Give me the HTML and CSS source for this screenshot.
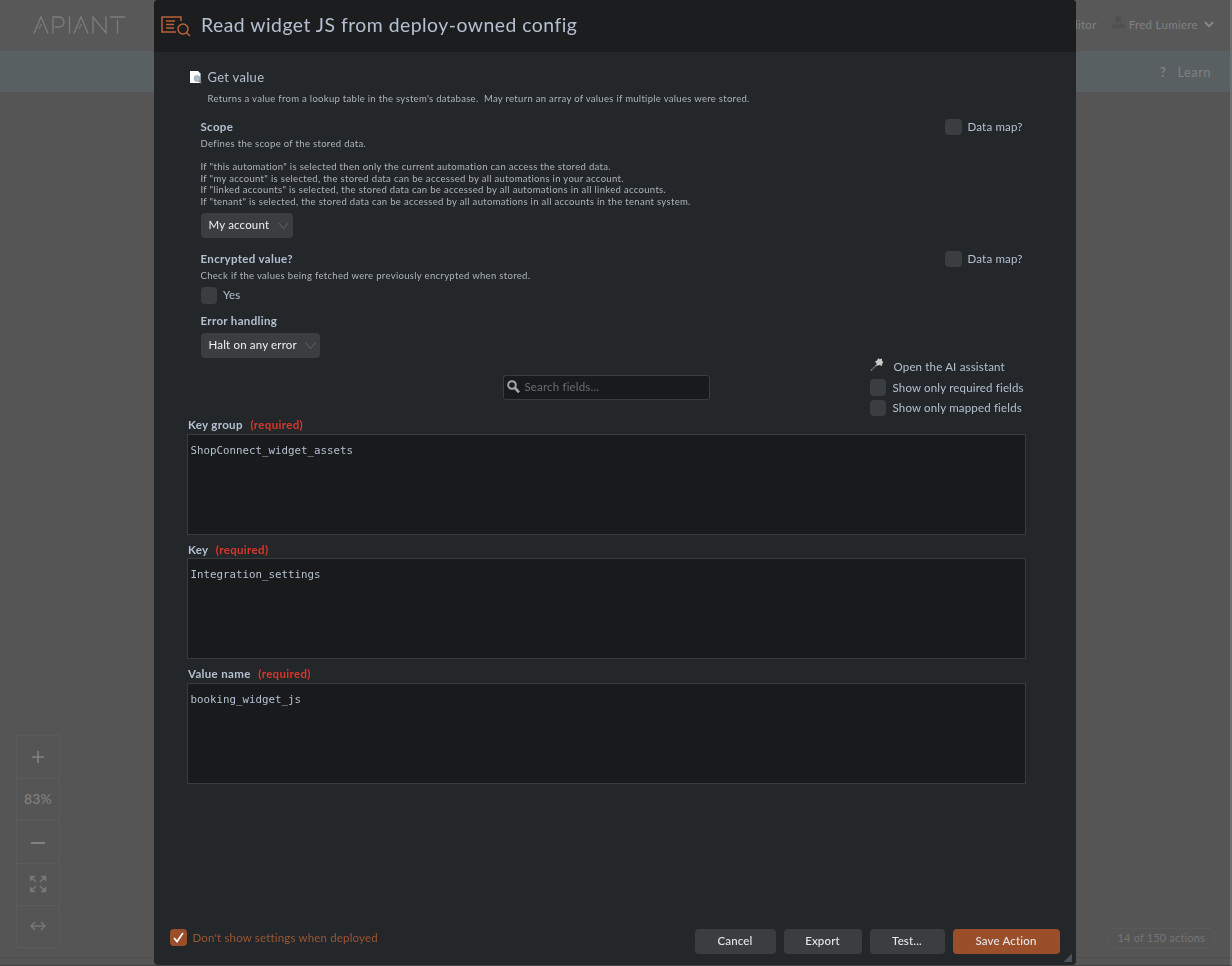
FILE: index.html
```html
<!DOCTYPE html>
<html lang="en">
<head>
    <meta charset="UTF-8">
    <title>APIANT - Automation Editor</title>
    <link rel="stylesheet" href="styles.css">
</head>
<body>
    <div class="page">
        <header class="topbar">
            <svg class="logo" width="92" height="18" viewBox="0 0 92 18" role="img" aria-label="APIANT">
                <g fill="none" stroke="#7d7d7d" stroke-width="1.3">
                    <path d="M1 17.500L8 .8L15 17.500M6 12.500L8.500 8"/>
                    <path d="M20 17.500V1H25Q31 1 31 6Q31 11 25 11H22"/>
                    <path d="M36.500 .5V17.500"/>
                    <path d="M41 17.500L48 .8L55 17.500M46 12.500L48.500 8"/>
                    <path d="M60 17.500V1L73 17V.5"/>
                    <path d="M77 1H92M84.500 3.500V17.500"/>
                </g>
            </svg>
            <div class="user">
                <span class="user-mode">Editor</span>
                <svg class="user-icon" width="13" height="13" viewBox="0 0 14 14"><path fill="#4f5053" d="M7 0a3.400 3.400 0 0 1 3.400 3.600C10.400 6 9 7.500 7 7.500S3.600 6 3.600 3.600A3.400 3.400 0 0 1 7 0zM0 13.500V11C0 9 2.500 8.500 4.500 8L7 9.500 9.500 8C11.500 8.500 14 9 14 11v2.500z"/></svg>
                <span class="user-name">Fred Lumiere</span>
                <svg width="10" height="7" viewBox="0 0 10 7"><path fill="none" stroke="#8b8b8b" stroke-width="1.800" d="M1 1.200L5 5.200L9 1.200"/></svg>
            </div>
        </header>
        <nav class="subbar">
            <span class="help">?</span>
            <span>Learn</span>
        </nav>
        <main class="canvas">
            <div class="zoom">
                <div class="zoom-cell"><svg width="14" height="14" viewBox="0 0 14 14"><path stroke="#818181" stroke-width="1.600" d="M7 1V13M1 7H13"/></svg></div>
                <div class="zoom-cell zoom-value">83%</div>
                <div class="zoom-cell"><svg width="16" height="4" viewBox="0 0 16 4"><path stroke="#818181" stroke-width="2" d="M1 3H15"/></svg></div>
                <div class="zoom-cell">
                    <svg width="18" height="18" viewBox="0 0 18 18">
                        <g fill="#777" stroke="#777" stroke-width="1.400">
                            <path d="M1.500 1.500H5L1.500 5ZM3 3L7 7"/>
                            <path d="M16.500 1.500H13L16.500 5ZM15 3L11 7"/>
                            <path d="M1.500 16.500H5L1.500 13ZM3 15L7 11"/>
                            <path d="M16.500 16.500H13L16.500 13ZM15 15L11 11"/>
                        </g>
                    </svg>
                </div>
                <div class="zoom-cell"><svg width="16" height="10" viewBox="0 0 16 10"><path fill="none" stroke="#777" stroke-width="1.500" d="M1 5H15M5 1L1 5L5 9M11 1L15 5L11 9"/></svg></div>
            </div>
            <div class="count">14 of 150 actions</div>
        </main>
    </div>

    <div class="modal">
        <div class="modal-header">
            <svg width="30" height="22" viewBox="0 0 30 22">
                <g fill="none" stroke="#b9623a" stroke-width="1.500">
                    <path d="M15 17H1V2H20V6"/>
                    <path d="M5 6H14M5 9.500H13M5 13H13"/>
                    <circle cx="22" cy="14" r="5"/>
                    <path d="M25.500 17.500L29 21"/>
                </g>
            </svg>
            <h1>Read widget JS from deploy-owned config</h1>
        </div>

        <div class="modal-body">
            <div class="action">
                <svg width="12" height="13" viewBox="0 0 12 13">
                    <path fill="#fff" d="M0 0H8L10.500 2.500V12H0Z"/>
                    <circle cx="7" cy="7.500" r="2.900" fill="#a9bccd" stroke="#8596a6" stroke-width=".6"/>
                    <path stroke="#778" stroke-width="1.300" d="M9 9.800L11.300 12.300"/>
                </svg>
                <h2>Get value</h2>
            </div>
            <p class="action-text">Returns a value from a lookup table in the system's database.&nbsp; May return an array of values if multiple values were stored.</p>

            <section class="setting">
                <div class="setting-head">
                    <h3>Scope</h3>
                    <label class="check"><span class="box"></span>Data map?</label>
                </div>
                <p class="hint">Defines the scope of the stored data.</p>
                <p class="hint-list">
                    If "this automation" is selected then only the current automation can access the stored data.<br>
                    If "my account" is selected, the stored data can be accessed by all automations in your account.<br>
                    If "linked accounts" is selected, the stored data can be accessed by all automations in all linked accounts.<br>
                    If "tenant" is selected, the stored data can be accessed by all automations in all accounts in the tenant system.
                </p>
                <div class="select select-scope">
                    <span>My account</span>
                    <svg width="11" height="8" viewBox="0 0 11 8"><path fill="none" stroke="#62666a" d="M.7 .8L5.500 6.800L10.300 .8"/></svg>
                </div>
            </section>

            <section class="setting">
                <div class="setting-head">
                    <h3>Encrypted value?</h3>
                    <label class="check"><span class="box"></span>Data map?</label>
                </div>
                <p class="hint">Check if the values being fetched were previously encrypted when stored.</p>
                <label class="check check-yes"><span class="box"></span>Yes</label>
            </section>

            <section class="setting setting-error">
                <div class="setting-head"><h3>Error handling</h3></div>
                <div class="select select-error">
                    <span>Halt on any error</span>
                    <svg width="11" height="8" viewBox="0 0 11 8"><path fill="none" stroke="#62666a" d="M.7 .8L5.500 6.800L10.300 .8"/></svg>
                </div>
            </section>

            <div class="tools">
                <div class="search">
                    <svg width="13" height="13" viewBox="0 0 13 13"><g fill="none" stroke="#a5a7a9"><circle cx="5" cy="5" r="3.800" stroke-width="2"/><path stroke-width="2.600" d="M8 8L12 12.300"/></g></svg>
                    <span>Search fields...</span>
                </div>
                <div class="filters">
                    <div class="assistant">
                        <svg width="14" height="14" viewBox="0 0 14 14">
                            <path stroke="#85888b" stroke-width="1.300" stroke-dasharray="2 .7" d="M1 12.500L7 6.500"/>
                            <path fill="#c8c8c8" d="M8.500 0L9.500 1.200L12 .5L12 2.500L13.300 4.500L12.300 5.500L12 8L9.500 7L6.500 8L6.500 5.500L5 3.500L7 2.500Z"/>
                        </svg>
                        <span>Open the AI assistant</span>
                    </div>
                    <label class="check"><span class="box"></span>Show only required fields</label>
                    <label class="check"><span class="box"></span>Show only mapped fields</label>
                </div>
            </div>

            <div class="fields">
                <div class="field">
                    <div class="field-label">Key group <span class="required">(required)</span></div>
                    <div class="field-input">ShopConnect_widget_assets</div>
                </div>
                <div class="field">
                    <div class="field-label">Key <span class="required">(required)</span></div>
                    <div class="field-input">Integration_settings</div>
                </div>
                <div class="field">
                    <div class="field-label">Value name <span class="required">(required)</span></div>
                    <div class="field-input">booking_widget_js</div>
                </div>
            </div>
        </div>

        <div class="modal-footer">
            <label class="check check-deploy">
                <span class="box box-on"><svg width="11" height="11" viewBox="0 0 11 11"><path fill="none" stroke="#fff" stroke-width="1.700" d="M1 6L4 9.500L10 1"/></svg></span>
                Don't show settings when deployed
            </label>
            <div class="buttons">
                <button class="btn btn-cancel">Cancel</button>
                <button class="btn btn-export">Export</button>
                <button class="btn btn-test">Test...</button>
                <button class="btn btn-save">Save Action</button>
            </div>
        </div>
        <span class="resize"></span>
    </div>
</body>
</html>
```

FILE: styles.css
```css
* {
    box-sizing: border-box;
}

body {
    margin: 0;
    font-family: Lato, "Open Sans", sans-serif;
    font-size: 11.5px;
    letter-spacing: 0.17px;
    color: #b4c0d0;
    background: #555;
    overflow: hidden;
}

h1, h2, h3, p {
    margin: 0;
}

svg {
    display: block;
    flex: none;
}

/* Editor behind the dialog */
.page {
    display: flex;
    flex-direction: column;
    height: 966px;
    border-right: 2px solid #707070;
    border-bottom: 1px solid #444;
    color: #818181;
}

.topbar {
    display: flex;
    justify-content: space-between;
    align-items: center;
    height: 51px;
    padding: 0 16px 1px 33px;
    background: #585858;
}

.user {
    display: flex;
    align-items: center;
    padding-bottom: 1px;
    letter-spacing: 0.3px;
}

.user-icon {
    margin: -4px 4px 0 15px;
}

.user-name {
    margin-right: 6px;
}

.subbar {
    display: flex;
    justify-content: flex-end;
    align-items: center;
    gap: 11px;
    height: 41px;
    padding-right: 19px;
    background: #586062;
    font-size: 13px;
    letter-spacing: 0.4px;
}

.help {
    font-weight: 700;
}

.canvas {
    flex: 1;
    display: flex;
    justify-content: space-between;
    align-items: flex-end;
    padding: 0 15px 9px 16px;
    background: #555;
    border-bottom: 1px solid #4d4d4d;
    margin-bottom: 7px;
}

.zoom {
    width: 44px;
    border: 1px solid #5b5b5b;
}

.zoom-cell {
    display: flex;
    justify-content: center;
    align-items: center;
    height: 42.2px;
    font-size: 14px;
    font-weight: 500;
}

.zoom-value {
    padding-bottom: 2px;
}

.zoom-cell + .zoom-cell {
    border-top: 1px solid #5b5b5b;
}

.count {
    height: 20px;
    padding: 0 9px;
    border: 1px solid #5a5a5a;
    border-radius: 5px;
    line-height: 18px;
    font-size: 11px;
    color: #757575;
}

/* Dialog */
.modal {
    position: fixed;
    top: 0;
    left: 153.5px;
    display: flex;
    flex-direction: column;
    width: 922.5px;
    height: 965px;
    border-radius: 4px;
    background: #23272a;
    overflow: hidden;
}

.modal-header {
    display: flex;
    align-items: center;
    gap: 10px;
    height: 52px;
    padding: 0 0 1px 7.5px;
    background: #1b1d1f;
}

.modal-header h1 {
    padding-bottom: 2px;
    font-size: 19.4px;
    font-weight: 400;
    letter-spacing: 0.48px;
}

.modal-body {
    flex: 1;
    padding: 15px 50px 0 33px;
}

.action {
    display: flex;
    align-items: center;
    gap: 6px;
    height: 21px;
    padding-left: 3px;
}

.action h2 {
    padding-bottom: 1px;
    font-size: 13px;
    font-weight: 400;
    letter-spacing: 0.3px;
}

.action-text {
    margin: 4px 0 13px 21px;
    line-height: 13px;
    font-size: 9.5px;
    letter-spacing: 0.3px;
    color: #aeb4bb;
}

.setting {
    padding-left: 14px;
}

.setting-head {
    display: flex;
    justify-content: space-between;
    align-items: center;
    height: 18px;
    padding-right: 3.5px;
}

h3 {
    padding-bottom: 1px;
    font-size: 11.5px;
    font-weight: 700;
    letter-spacing: 0.33px;
}

.hint,
.hint-list {
    font-size: 9.5px;
    letter-spacing: 0.32px;
    color: #aeb4bb;
}

.hint {
    margin-top: 2px;
    line-height: 12px;
}

.hint-list {
    margin: 11px 0 6px;
    line-height: 11.6px;
}

.check {
    display: flex;
    align-items: center;
    gap: 6px;
    height: 17px;
    padding-bottom: 1px;
    white-space: nowrap;
}

.box {
    display: flex;
    justify-content: center;
    align-items: center;
    width: 16.5px;
    height: 16.5px;
    margin-bottom: -1px;
    border-radius: 4px;
    background: #3a3e41;
}

.box-on {
    background: #9a4e2a;
}

.select {
    display: flex;
    justify-content: space-between;
    align-items: center;
    height: 24.5px;
    padding: 0 4px 0 8px;
    border-radius: 4px;
    background: #3a3e41;
    color: #eef0f2;
}

.select span {
    padding-bottom: 2px;
}

.select-scope {
    width: 92px;
    margin-bottom: 12px;
}

.check-yes {
    margin-top: 5px;
}

.setting-error {
    margin-top: 8px;
}

.select-error {
    width: 119px;
    margin-top: 3.5px;
}

.tools {
    display: flex;
    justify-content: space-between;
    height: 59px;
    padding-left: 316px;
}

.search {
    display: flex;
    align-items: center;
    gap: 5px;
    width: 207px;
    height: 25px;
    margin-top: 17px;
    padding: 0 0 1px 3px;
    border: 1px solid #3a3d40;
    border-radius: 3px;
    background: #191a1c;
    color: #6a6e71;
}

.filters {
    width: 156.5px;
}

.assistant {
    display: flex;
    gap: 10px;
    height: 19.5px;
    line-height: 18px;
}

.filters .check {
    gap: 6.5px;
    height: 20.5px;
}

.field {
    height: 124.5px;
}

.fields {
    padding-top: 0.5px;
}

.field-label {
    height: 16.5px;
    padding-left: 1.5px;
    line-height: 15px;
    font-weight: 700;
    letter-spacing: 0.33px;
}

.required {
    margin-left: 4.5px;
    color: #dc3529;
}

.field-input {
    height: 101px;
    padding: 9px 3px;
    border: 1px solid #393c3f;
    background: #191a1c;
    font-family: "DejaVu Sans Mono", monospace;
    font-size: 10.8px;
    line-height: 14px;
    letter-spacing: 0;
}

.modal-footer {
    display: flex;
    justify-content: space-between;
    height: 36px;
    padding: 0 16.5px 0 16.5px;
}

.check-deploy {
    color: #9c5633;
}

.buttons {
    display: flex;
    gap: 8px;
}

.btn {
    height: 25px;
    padding: 0 0 2px;
    border: none;
    border-radius: 4px;
    background: #3a3e41;
    color: #e4e7ea;
    font-family: inherit;
    font-size: 11.5px;
    font-weight: 500;
    letter-spacing: 0.15px;
}

.btn-cancel {
    width: 81px;
}

.btn-export {
    width: 78px;
}

.btn-test {
    width: 75px;
}

.btn-save {
    width: 107px;
    background: #9a4e2a;
}

.resize {
    position: absolute;
    right: 4px;
    bottom: 3px;
    width: 8px;
    height: 8px;
    background: linear-gradient(135deg, transparent 50%, #4a5358 50%);
}
```
